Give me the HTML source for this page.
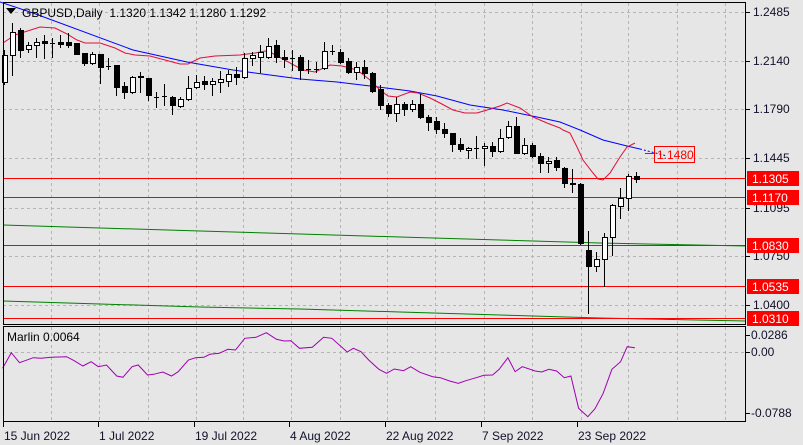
<!DOCTYPE html>
<html><head><meta charset="utf-8">
<style>
html,body{margin:0;padding:0;background:#e6e6e6;width:803px;height:445px;overflow:hidden}
svg{display:block}
text{font-family:"Liberation Sans",sans-serif;font-size:12px;fill:#000}
</style></head>
<body>
<svg id="s" width="803" height="445" xmlns="http://www.w3.org/2000/svg"></svg>
<script>
var o='';
function L(x1,y1,x2,y2,c,w,d){o+='<line x1="'+x1+'" y1="'+y1+'" x2="'+x2+'" y2="'+y2+'" stroke="'+c+'" stroke-width="'+(w||1)+'"'+(d?' stroke-dasharray="'+d+'"':'')+' shape-rendering="crispEdges"/>';}
function T(x,y,t,c,a){o+='<text x="'+x+'" y="'+y+'"'+(c?' style="fill:'+c+'"':'')+(a?' text-anchor="'+a+'"':'')+'>'+t+'</text>';}
function P(pts,c,d){o+='<polyline fill="none" stroke="'+c+'" stroke-width="1"'+(d?' stroke-dasharray="'+d+'"':'')+' points="'+pts.map(function(p){return p[0]+','+p[1]}).join(' ')+'"/>';}
var gx=[51,99,148,196,243,291,340,387,435,484,532,581,628,677,725];
gx.forEach(function(x){L(x+.5,3,x+.5,324,'#b4b4b4',1,'3,3');L(x+.5,327,x+.5,421,'#b4b4b4',1,'3,3');});
var gy=[[12,'1.2485'],[61,'1.2140'],[109,'1.1790'],[158,'1.1445'],[208,'1.1095'],[256,'1.0750'],[305,'1.0400']];
gy.forEach(function(g){L(3,g[0]+.5,746,g[0]+.5,'#b4b4b4',1,'3,3');L(746,g[0]+.5,750,g[0]+.5,'#000');T(753,g[0]+4,g[1],'#10102a');});
L(3,352.5,746,352.5,'#b4b4b4',1,'3,3');
P([[3,225],[100,228],[200,231],[300,234],[400,237],[500,240],[600,243],[746,246]],'#008000');
P([[3,301],[100,304],[200,307],[300,309],[400,312],[500,315],[600,318],[746,321]],'#008000');
[[178,'1.1305'],[197,'1.1170'],[245,'1.0830'],[286,'1.0535'],[318,'1.0310']].forEach(function(r){
 L(3,r[0]+.5,746,r[0]+.5,'#ff0000');
 o+='<rect x="747" y="'+(r[0]-7)+'" width="52" height="15" fill="#ff0000"/>';
 T(752,r[0]+5,r[1],'#fff');
});
P([[0,2],[33,13],[133,50],[187,62],[233,70],[270,75],[300,79],[337,82],[370,86],[410,91],[437,96],[470,105],[503,110],[537,117],[560,122],[580,130],[603,140],[627,146],[640,149]],'#0000ff');
P([[640,149],[667,156]],'#0000ff','2,2');
P([[3,43],[15,35],[40,27],[55,28],[67,34],[77,40],[85,43],[100,43],[115,48],[125,53],[135,55],[150,56],[165,60],[180,64],[188,64],[200,58],[215,56],[240,55],[255,53],[265,51],[270,52],[303,70],[315,72],[330,65],[342,66],[357,70],[370,80],[380,90],[388,96],[397,97],[410,92],[418,93],[430,98],[440,103],[453,110],[465,113],[477,113],[487,110],[500,106],[507,103],[520,108],[533,117],[547,123],[560,128],[563,130],[570,133],[577,147],[583,160],[593,173],[598,179],[603,180],[610,173],[620,157],[627,147],[635,143]],'#e0103c');
L(645,153.5,655,153.5,'#ff0000');
o+='<rect x="654.5" y="146.5" width="40" height="16" fill="none" stroke="#ff0000"/>';
T(657,159,'1.1480','#ff0000');
var C=[[55,82,50,84,1],[32,55,23,75,1],[30,50,28,57,0],[45,49,42,52,1],[42,45,38,57,1],[41,43,35,58,0],[43,43,38,57,0],[42,44,35,47,0],[42,45,33,47,0],[43,54,43,54,0],
[53,63,53,65,0],[54,63,52,64,1],[54,67,54,83,0],[66,66,58,69,0],[65,87,65,95,0],[86,92,82,98,0],[77,92,76,93,1],[76,77,72,92,1],[78,95,78,100,0],[97,97,92,107,0],
[96,96,84,105,0],[97,105,96,114,0],[99,106,97,107,1],[88,99,76,100,1],[82,87,75,88,1],[81,84,76,89,0],[81,84,78,95,1],[79,82,71,92,1],[74,81,70,86,1],[74,77,67,84,0],
[58,77,53,78,1],[55,58,52,65,1],[52,57,45,72,1],[46,57,38,58,1],[45,57,40,62,0],[57,59,50,67,0],[58,58,50,70,0],[57,70,55,79,0],[69,69,60,73,0],[69,69,62,72,0],
[51,68,42,69,1],[51,51,45,54,0],[52,62,49,63,0],[61,72,58,73,0],[67,72,62,79,1],[67,73,60,78,0],[73,91,72,92,0],[89,105,85,109,0],[105,113,103,116,0],[104,113,97,121,1],
[104,109,102,115,0],[104,109,100,111,1],[104,117,94,118,0],[117,122,115,130,0],[121,129,117,133,0],[129,133,123,137,0],[133,144,133,151,0],[144,149,138,151,0],[148,150,147,158,1],[148,148,136,158,0],
[146,148,143,165,1],[146,151,142,156,0],[138,151,129,152,1],[126,137,121,138,1],[126,153,117,153,0],[145,153,138,154,1],[145,156,143,157,0],[156,163,153,172,0],[161,163,157,172,1],[160,167,157,170,0],
[168,183,167,187,0],[183,184,169,192,0],[184,243,183,244,0],[250,266,231,313,0],[259,266,252,271,1],[237,259,233,286,1],[205,237,204,255,1],[198,206,188,218,1],[176,198,174,210,1],[176,179,172,182,0]];
C.forEach(function(c,i){var x=4+8*i;
 L(x+.5,c[2],x+.5,c[3]+1,'#000');
 var h=Math.max(1,c[1]-c[0]);
 if(c[1]-c[0]<1){L(x-2,c[0]+.5,x+3,c[0]+.5,'#000');}
 else o+='<rect x="'+(x-2)+'.5" y="'+c[0]+'.5" width="5" height="'+h+'" fill="'+(c[4]?'#fff':'#000')+'" stroke="#000" shape-rendering="crispEdges"/>';
});
var Z=[[5,175],[22,128],[38,158],[65,143],[80,145],[100,142],[130,140],[145,152],[162,168],[178,155],[192,170],[208,165],[228,198],[240,202],[258,170],[270,165],[288,195],[300,193],[318,186],[335,198],[348,185],[368,150],[382,143],[398,142],[410,133],[428,130],[445,118],[460,120],[478,85],[500,82],[520,68],[540,88],[555,93],[568,92],[585,115],[610,112],[632,82],[648,85],[678,126],[690,115],[705,125],[720,150],[740,178],[755,190],[770,177],[788,182],[802,170],[820,187],[845,200],[860,203],[878,213],[895,220],[910,212],[930,203],[945,196],[962,195],[975,178],[992,143],[1006,185],[1020,170],[1045,183],[1058,186],[1072,178],[1087,183],[1102,203],[1115,198],[1130,295],[1148,320],[1162,296],[1178,250],[1195,178],[1212,155],[1225,110],[1240,113]];
P(Z.map(function(p){return [(p[0]/1.953).toFixed(1),(310+p[1]/3).toFixed(1)]}),'#a000b0');
T(7,341,'Marlin 0.0064');
[[335,'0.0286'],[352,'0.00'],[413,'-0.0788']].forEach(function(g){L(746,g[0]+.5,750,g[0]+.5,'#000');T(751,g[0]+4,g[1],'#10102a');});
o+='<rect x="3.5" y="2.5" width="742" height="322" fill="none" stroke="#000"/>';
o+='<rect x="3.5" y="326.5" width="742" height="95" fill="none" stroke="#000"/>';
o+='<polygon points="6,8 16,8 11,14" fill="#000"/>';
T(22,17,'GBPUSD,Daily&#160;&#160;1.1320 1.1342 1.1280 1.1292');
[[3,'15 Jun 2022'],[98,'1 Jul 2022'],[194,'19 Jul 2022'],[289,'4 Aug 2022'],[385,'22 Aug 2022'],[481,'7 Sep 2022'],[577,'23 Sep 2022']].forEach(function(d){L(d[0]+.5,422,d[0]+.5,427,'#000');T(d[0]+1,440,d[1],'#10102a');});
document.getElementById('s').innerHTML=o;
</script>
</body></html>
